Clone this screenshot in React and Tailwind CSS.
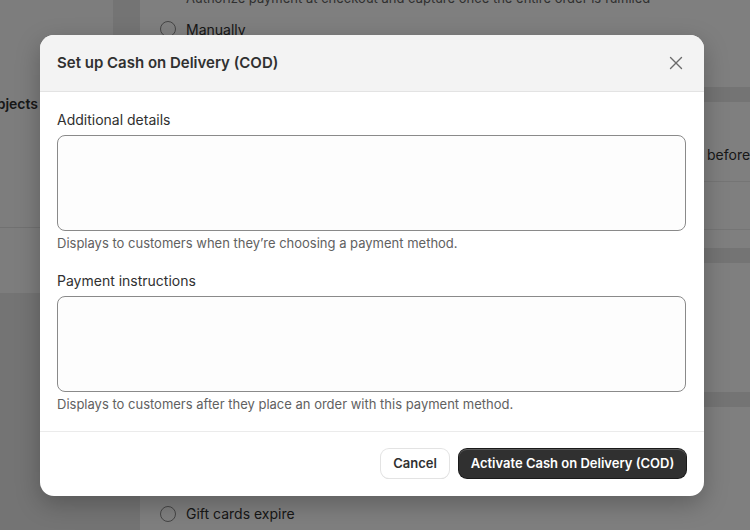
import React from 'react';
import { X } from 'lucide-react';

const font = { fontFamily: 'Inter, "Noto Sans", sans-serif' };

const Radio = ({ label }) => (
  <div className="flex items-center gap-[10px] text-[14px] text-[#303030]">
    <span className="w-[16px] h-[16px] rounded-full border border-[#8a8a8a] bg-white" />
    {label}
  </div>
);

const Field = ({ label, help }) => (
  <div className="flex flex-col">
    <label className="text-[14px] leading-5 text-[#303030] mb-[5px]">{label}</label>
    <textarea className="h-[96px] w-full resize-none rounded-[8px] border border-[#8a8a8a] bg-[#fdfdfd] outline-none" />
    <p className="mt-[2px] text-[13px] leading-5 text-[#616161]">{help}</p>
  </div>
);

const App = () => {
  return (
    <div className="relative w-[750px] h-[530px] overflow-hidden bg-[#e8e8e8]" style={font}>
      {/* page behind the dialog */}
      <div className="flex gap-[27px] h-full">
        <div className="w-[113px] shrink-0 h-[293px] bg-[#fbfbfb] flex flex-col overflow-hidden">
          <div className="h-[228px] border-b border-[#e3e3e3] flex flex-col justify-start pt-[93px] items-end pr-[75px]">
            <span className="text-[14px] font-semibold text-[#303030] whitespace-nowrap">Metaobjects</span>
          </div>
        </div>
        <div className="flex-1 flex flex-col gap-[15px] -mt-[12px] overflow-hidden">
          <div className="h-[99px] bg-white pl-[20px] pt-[1px] flex flex-col gap-[10px]">
            <p className="pl-[26px] text-[13px] text-[#616161] whitespace-nowrap">
              Authorize payment at checkout and capture once the entire order is fulfilled
            </p>
            <Radio label="Manually" />
          </div>
          <div className="h-[146px] bg-white flex flex-col">
            <div className="h-[80px] border-b border-[#ebebeb] flex items-center pl-[567px] pt-[26px] overflow-hidden">
              <span className="text-[14px] text-[#303030] whitespace-nowrap">before you capture</span>
            </div>
            <div className="h-[48px] border-b border-[#ebebeb]" />
          </div>
          <div className="h-[129px] bg-white" />
          <div className="flex-1 bg-white pl-[20px] pt-[96px]">
            <Radio label="Gift cards expire" />
          </div>
        </div>
      </div>

      {/* overlay */}
      <div className="absolute inset-0 bg-black/50" />

      {/* dialog */}
      <div className="absolute left-[40px] top-[35px] w-[664px] rounded-[14px] bg-white overflow-hidden shadow-[0_8px_24px_rgba(0,0,0,0.25)]">
        <div className="h-[57px] bg-[#f3f3f3] border-b border-[#e3e3e3] flex items-center justify-between pl-[17px] pr-[17px]">
          <h2 className="text-[15px] font-semibold text-[#303030]">Set up Cash on Delivery (COD)</h2>
          <X size={22} strokeWidth={1.5} className="text-[#6b6b6b]" />
        </div>
        <div className="pl-[17px] pr-[18px] pt-[18px] pb-[17px] flex flex-col gap-[18px] border-b border-[#ebebeb]">
          <Field label="Additional details" help="Displays to customers when they’re choosing a payment method." />
          <Field label="Payment instructions" help="Displays to customers after they place an order with this payment method." />
        </div>
        <div className="flex justify-end gap-[10px] pr-[18px] pt-[17px] pb-[18px]">
          <button className="h-[29px] w-[68px] rounded-[8px] bg-white text-[13px] font-semibold text-[#303030] shadow-[0_0_0_1px_#e3e3e3,0_1px_0_#d4d4d4]">
            Cancel
          </button>
          <button className="h-[29px] w-[227px] rounded-[8px] bg-[#303030] text-[13px] font-semibold text-white shadow-[inset_0_1px_0_rgba(255,255,255,0.2),0_0_0_1px_#1a1a1a]">
            Activate Cash on Delivery (COD)
          </button>
        </div>
      </div>
    </div>
  );
};

export default App;
